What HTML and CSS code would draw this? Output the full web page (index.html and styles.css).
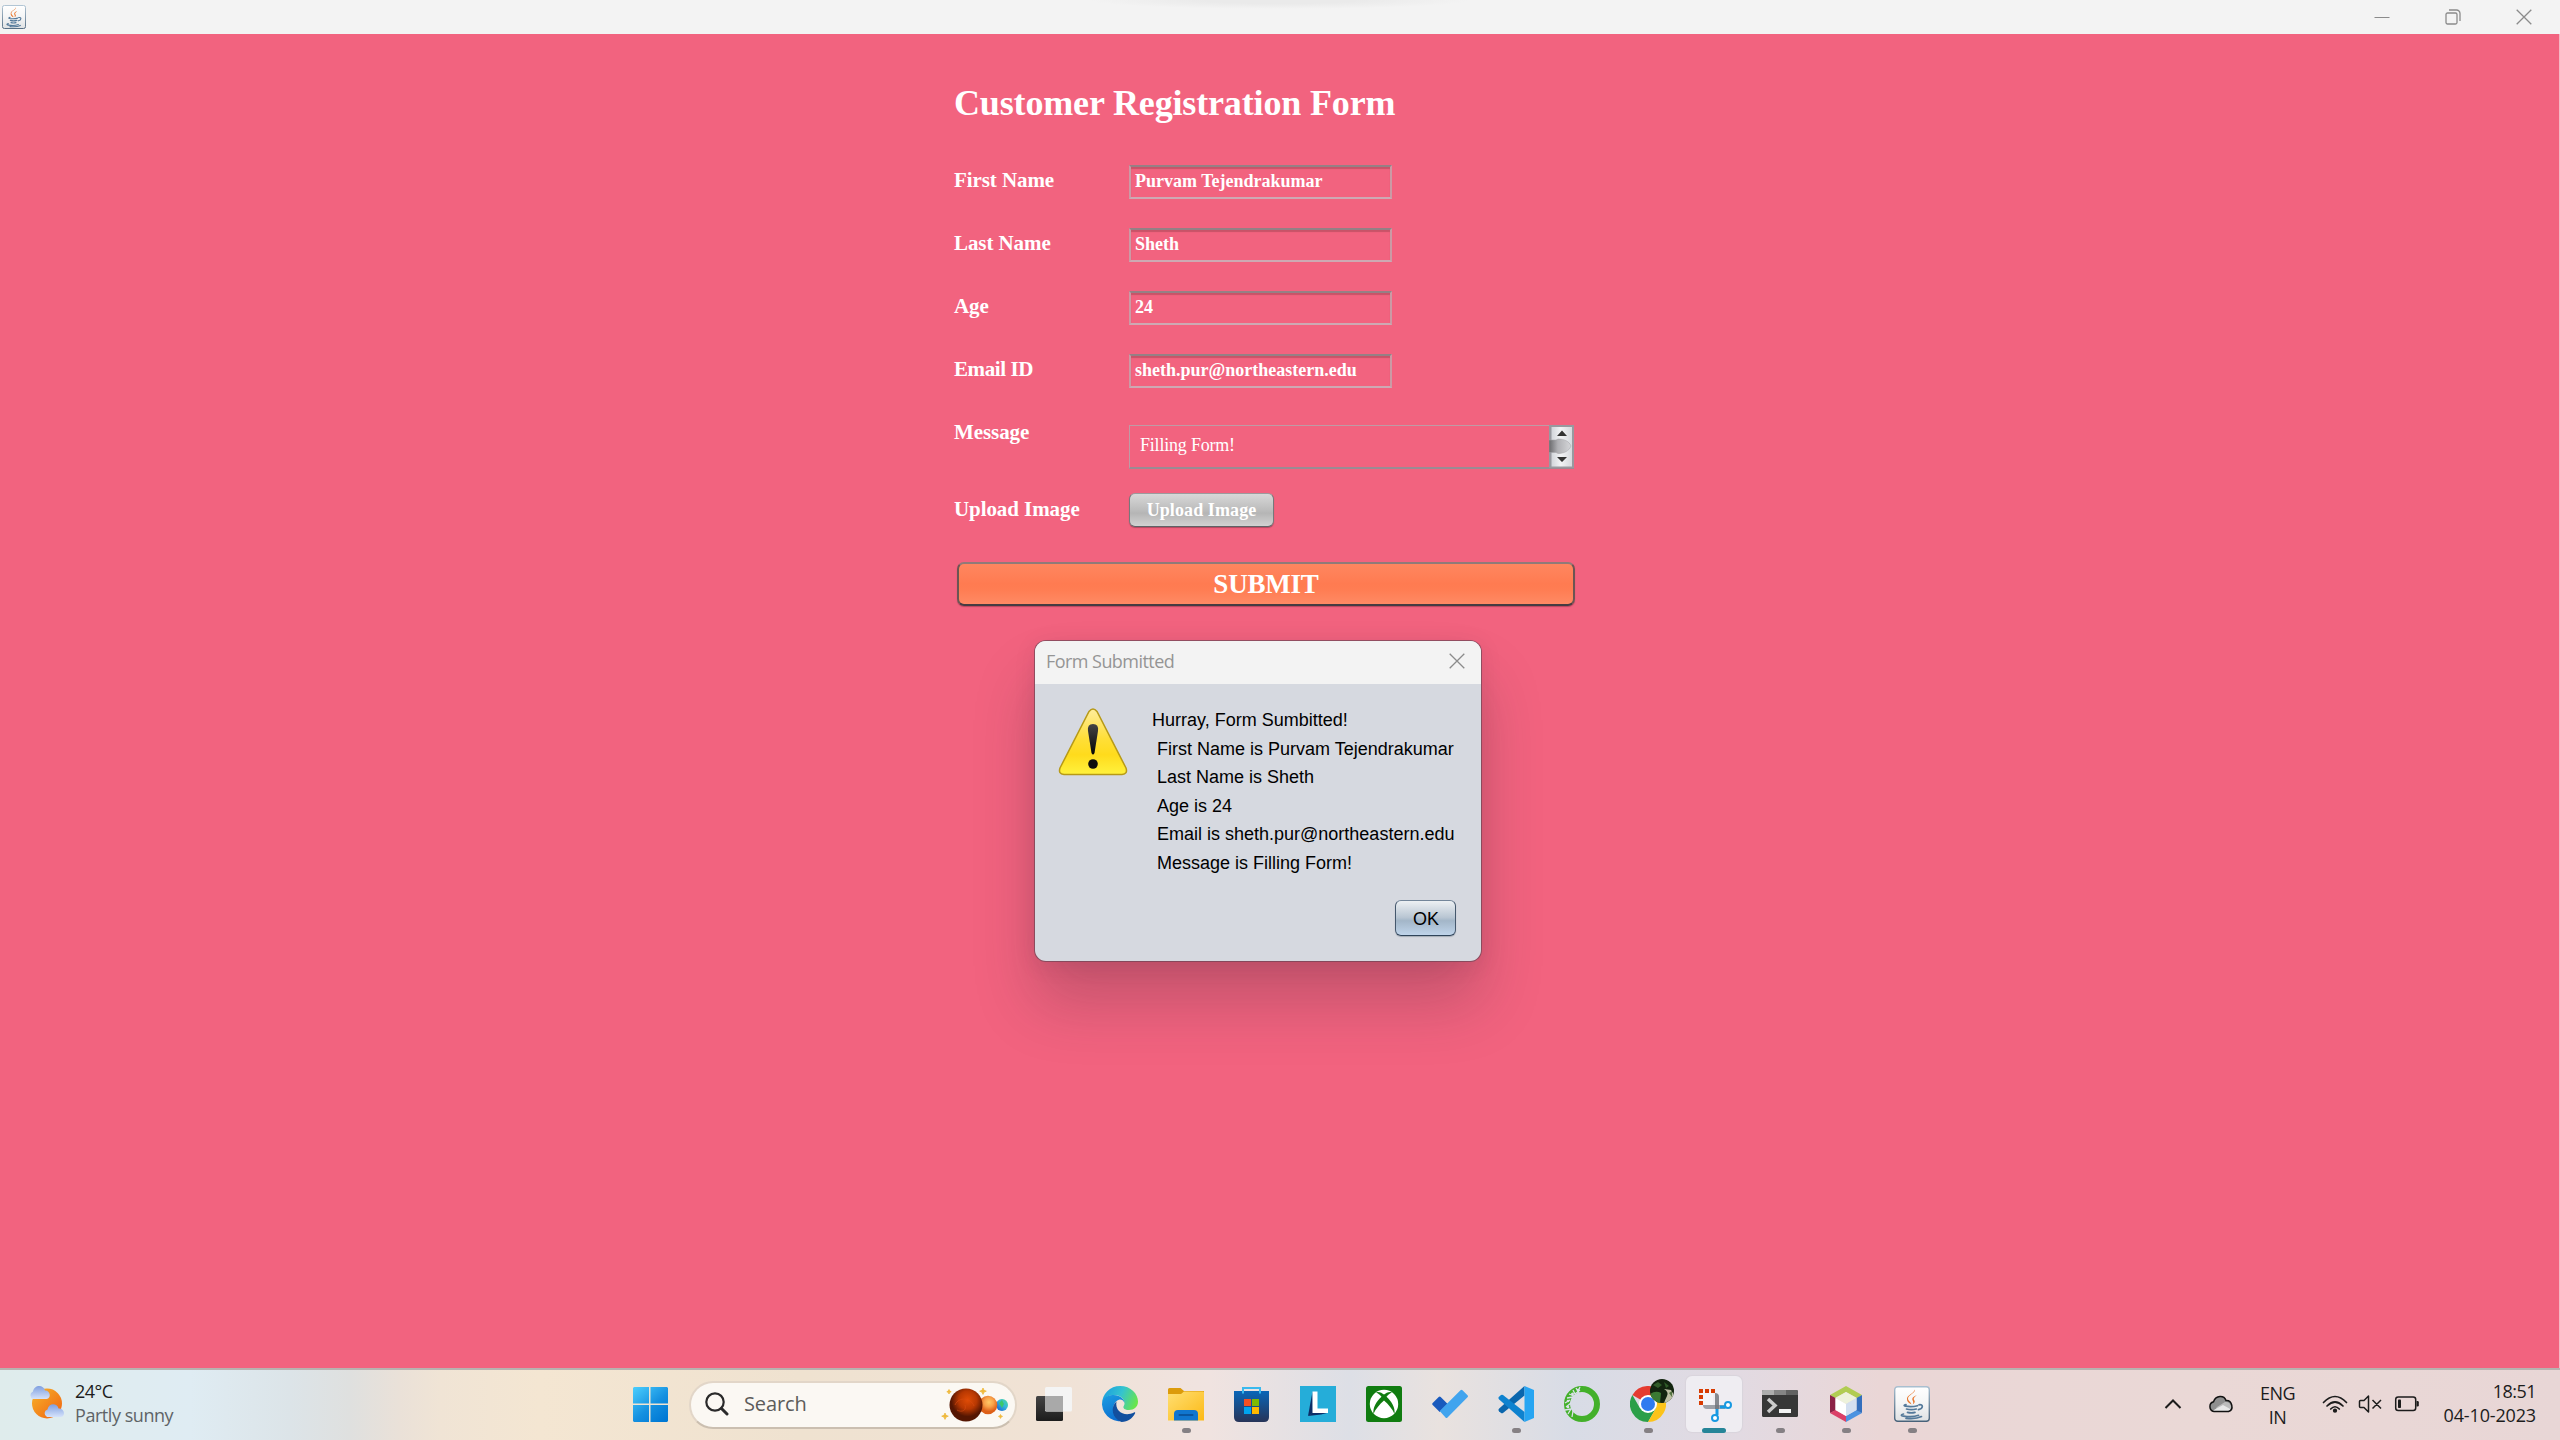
FILE: index.html
```html
<!DOCTYPE html>
<html lang="en">
<head>
<meta charset="utf-8">
<title>Customer Registration Form</title>
<link rel="stylesheet" href="styles.css">
</head>
<body>
<svg class="defs" aria-hidden="true">
  <defs>
    <linearGradient id="jbg" x1="0" y1="0" x2="0" y2="1"><stop offset="0" stop-color="#fff"/><stop offset=".5" stop-color="#f4f5f6"/><stop offset="1" stop-color="#dfe1e3"/></linearGradient>
    <linearGradient id="jbd" x1="0" y1="0" x2="0" y2="1"><stop offset="0" stop-color="#a9bfd0"/><stop offset="1" stop-color="#48627a"/></linearGradient>
    <symbol id="java" viewBox="0 0 36 36">
      <rect x=".7" y=".7" width="34.6" height="34.6" rx="3" fill="url(#jbg)" stroke="url(#jbd)" stroke-width="1.4"/>
      <path d="M20.5 3.5c2 3-6.500 5.500-6.500 9 0 2.500 3 3.500 3.500 6-3-1.500-5-3.500-4.500-6.300.6-3.400 7.500-5 7.500-8.700z" fill="#e8762d"/>
      <path d="M23 9c-3 1.200-5 2.500-4.700 4.500.3 1.500 1.800 2.500.4 5 4-3 1-4 1-5.500 0-1.200 1.500-2.500 3.300-4z" fill="#e8762d"/>
      <g fill="none" stroke="#54799a" stroke-width="1.700" stroke-linecap="round"><path d="M12 18.600c-2 .5-2.600 1.200-.5 1.600 3.500.6 9 .3 12-.5"/><path d="M12.500 23c3 .9 7 .8 9.800 0M13.500 26.400c2.500.7 5 .7 7.500 0M25 18.800c4.500-.8 4.500 3.700-.5 4.900"/><path d="M9.500 28c-2.500.7-3.200 1.600 0 2.100 5 .8 11.500.6 15-.8M12 32.400c5 .5 11.500.3 15.500-1.800"/></g>
    </symbol>
    <symbol id="close" viewBox="0 0 16 16"><path d="M.7.700l14.600 14.600M15.300.700.7 15.300" stroke="#8b8b8b" stroke-width="1.300" fill="none"/></symbol>
  </defs>
</svg>

<div class="screen">
  <header class="titlebar">
    <svg class="app-icon"><use href="#java"/></svg>
    <div class="controls">
      <svg width="16" height="16"><path d="M.5 8.500h15" stroke="#8b8b8b" stroke-width="1"/></svg>
      <svg width="16" height="16" fill="none" stroke="#8b8b8b" stroke-width="1.300"><rect x="1" y="4" width="11" height="11" rx="1.500"/><path d="M4 1h7.500A3.500 3.500 0 0 1 15 4.500V12"/></svg>
      <svg width="16" height="16"><use href="#close"/></svg>
    </div>
  </header>

  <main class="client">
    <form class="form">
      <h1>Customer Registration Form</h1>
      <div class="row"><label>First Name</label><div class="field">Purvam Tejendrakumar</div></div>
      <div class="row"><label>Last Name</label><div class="field">Sheth</div></div>
      <div class="row"><label>Age</label><div class="field">24</div></div>
      <div class="row"><label class="tight">Email ID</label><div class="field">sheth.pur@northeastern.edu</div></div>
      <div class="row">
        <label>Message</label>
        <div class="area"><span>Filling Form!</span>
          <svg width="25" height="43" viewBox="0 0 25 43">
            <defs><linearGradient id="sb"><stop offset="0" stop-color="#d2d5da"/><stop offset=".45" stop-color="#f2f3f5"/><stop offset="1" stop-color="#d6d9dd"/></linearGradient><linearGradient id="th"><stop offset="0" stop-color="#69696c"/><stop offset=".4" stop-color="#b0b0b4"/><stop offset="1" stop-color="#d5d6d9"/></linearGradient></defs>
            <rect x="0" y="0" width="25" height="43" fill="#98999f"/><rect x="2.500" y="2" width="20.500" height="39.500" fill="url(#sb)"/>
            <path d="M0 15h7l2-1c6 0 11 2 13 7-2 5-7 7.500-13 7.500l-2-1H0z" fill="url(#th)" stroke="#a2a3a7" stroke-width=".5"/>
            <path d="M8 11l5-5.500 5 5.500zM8 32l5 5 5-5z" fill="#333"/>
          </svg>
        </div>
      </div>
      <div class="row upload"><label>Upload Image</label><button type="button" class="btn-upload">Upload Image</button></div>
      <button type="button" class="btn-submit">SUBMIT</button>
    </form>
  </main>

  <footer class="taskbar">
    <div class="weather">
      <svg width="38" height="40" viewBox="0 0 38 40">
        <defs><linearGradient id="sun" x1="0" y1="0" x2="1" y2="1"><stop offset="0" stop-color="#f7b52b"/><stop offset="1" stop-color="#f0600f"/></linearGradient><linearGradient id="cl" x1="0" y1="0" x2="0" y2="1"><stop offset="0" stop-color="#7f9fe0"/><stop offset="1" stop-color="#d5e2fb"/></linearGradient></defs>
        <ellipse cx="19" cy="19.500" rx="15" ry="15" fill="url(#sun)"/>
        <path d="M5 15a4 4 0 0 1 0-7.500C6 .5 15.500 0 17 6.500c5-.5 7 7.500 1.500 8.500z" fill="url(#cl)"/>
        <path d="M19 33a4 4 0 0 1 .5-7.500c1-6.500 9.500-7 11-1 6-.5 7.500 7.500 2.500 8.500z" fill="url(#cl)"/>
      </svg>
      <div class="lines"><span class="temp">24°C</span><span class="muted">Partly sunny</span></div>
    </div>

    <svg class="start" viewBox="0 0 36 36">
      <defs><linearGradient id="win" gradientUnits="userSpaceOnUse" x1="0" y1="0" x2="30" y2="36"><stop offset="0" stop-color="#4fd2ff"/><stop offset=".6" stop-color="#1590e0"/><stop offset="1" stop-color="#0078d4"/></linearGradient></defs>
      <g fill="url(#win)"><path d="M2 1h15v16.500H1V2zM18.500 1H35l1 1v15.500H18.500zM1 19h16v17H2l-1-1zM18.500 19H36v16l-1 1H18.500z"/></g>
    </svg>

    <div class="search">
      <svg width="24" height="24" fill="none" stroke="#2a2a2a" stroke-width="2.200" stroke-linecap="round"><circle cx="10" cy="10" r="8.700"/><path d="M16.500 16.500l5.500 5.500" stroke-width="3"/></svg>
      <span>Search</span>
      <svg class="planets" width="70" height="36" viewBox="0 0 70 36">
        <defs><radialGradient id="mars" cx=".55" cy=".35"><stop offset="0" stop-color="#e04c06"/><stop offset=".55" stop-color="#b83802"/><stop offset="1" stop-color="#551602"/></radialGradient><radialGradient id="ven" cx=".55" cy=".35"><stop offset="0" stop-color="#ffc966"/><stop offset=".5" stop-color="#f8a14a"/><stop offset="1" stop-color="#dd5f18"/></radialGradient><linearGradient id="ear" x1="1" y1="0" x2="0" y2="1"><stop offset="0" stop-color="#4ee08d"/><stop offset=".45" stop-color="#36b5dd"/><stop offset="1" stop-color="#1652cf"/></linearGradient></defs>
        <circle cx="62" cy="18" r="6" fill="url(#ear)"/><path d="M59 16l3-3 2 4-2 4z" fill="#3cc86c"/>
        <circle cx="48" cy="18" r="9.300" fill="url(#ven)"/><circle cx="26" cy="18" r="16.500" fill="url(#mars)"/>
        <path d="M15 18c4-9 16-7 19 1M17 23c5 3 10 0 8-5" stroke="#d94b12" fill="none" opacity=".6"/>
        <path d="M43 1l1 2.300 2.300.9-2.300.9-1 2.300-1-2.300-2.300-.9 2.300-.9zM9 2.500l.7 1.500 1.500.7-1.500.7L9 7l-.7-1.600-1.500-.7 1.500-.7zM5 26l1 2.300 2.300.9-2.300.9-1 2.300-1-2.300-2.300-.9 2.300-.9zM60.500 27.500l.6 1.300 1.400.6-1.400.6-.6 1.400-.6-1.400-1.400-.6 1.400-.6z" fill="#efb93c" stroke="#efb93c" stroke-width=".8"/>
      </svg>
    </div>

    <nav class="apps">
      <div class="app">
        <svg viewBox="0 0 36 36"><defs><linearGradient id="tv" x1="0" y1="0" x2="0" y2="1"><stop offset="0" stop-color="#444"/><stop offset="1" stop-color="#1c1c1c"/></linearGradient></defs><rect y="10" width="27" height="25" rx="1.500" fill="url(#tv)"/><rect x="9" y="1" width="27" height="24.500" rx="1.500" fill="#f4f4f4"/><path d="M9 10h18v15.500H10.500L9 24z" fill="#a9a9a9"/></svg>
      </div>
      <div class="app">
        <svg viewBox="0 0 36 36"><defs><linearGradient id="e1" x1="0" y1=".3" x2="1" y2=".6"><stop offset="0" stop-color="#1b9fe0"/><stop offset=".5" stop-color="#35c3cf"/><stop offset="1" stop-color="#6ae649"/></linearGradient><linearGradient id="e2" x1="0" y1="0" x2=".4" y2="1"><stop offset="0" stop-color="#1b9de2"/><stop offset="1" stop-color="#0c6fd0"/></linearGradient></defs>
          <path d="M0 18A18 18 0 0 1 18 0c11 0 18 8 18 15.500 0 5.500-4 8.500-9 8.500-4.500 0-6-1.800-5.500-3.500.8-1.500 1-2 1-3.500C22 12 18 9 11.500 9 5.500 9 1 13 0 18z" fill="url(#e1)"/>
          <path d="M0 18.500C0 12 5.500 8.500 11.500 9c6.500.3 10.800 4 11 8-1-3-3.800-4-5.500-3.300-5 1.800-7 8-4.500 13 2.500 4.800 7 7.300 12 7.300A18 18 0 0 1 0 18.500z" fill="url(#e2)"/>
          <path d="M14.500 15.500c-6.500 5.500-4.500 17 5 20.500 6.500 0 11-3.700 13.500-8.500.5-1.300-.3-1.500-1-1-9 4.500-19.500-.5-17.500-11z" fill="#124f9e"/></svg>
      </div>
      <div class="app running">
        <svg viewBox="0 0 36 36"><defs><linearGradient id="fo" x1="0" y1="0" x2="1" y2="1"><stop offset="0" stop-color="#ffdf73"/><stop offset="1" stop-color="#fcb915"/></linearGradient></defs><path d="M0 3.500Q0 2 1.500 2h11l3.500 3H36v5H0z" fill="#dc9b0b"/><path d="M0 8h13l3-2.500h19q1 0 1 1V34.500H0z" fill="url(#fo)"/><path d="M6 34.500V28q0-4 4-4h16q4 0 4 4v6.500z" fill="#1076cf"/><rect x="10.500" y="28" width="15" height="2" rx="1" fill="#0a559f"/></svg>
      </div>
      <div class="app">
        <svg viewBox="0 0 36 36"><defs><linearGradient id="st" x1="0" y1="0" x2="0" y2="1"><stop offset="0" stop-color="#0a66b8"/><stop offset="1" stop-color="#273458"/></linearGradient></defs><path d="M0 5h35v26q0 5-5 5H5q-5 0-5-5z" fill="url(#st)"/><path d="M9 7.500V2h17v5.500" fill="none" stroke="#39b9ee" stroke-width="2"/><path d="M10 13h7v7h-7z" fill="#f25022"/><path d="M18 13h7v7h-7z" fill="#7fba00"/><path d="M10 21h7v7h-7z" fill="#00a4ef"/><path d="M18 21h7v7h-7z" fill="#ffb900"/></svg>
      </div>
      <div class="app">
        <svg viewBox="0 0 36 36"><path d="M0 0h36v36H0z" fill="#25add9"/><path d="M12.500 5.500L8 30l5-3z" fill="#0d2d66"/><path d="M8 30l5-3.500 14 .5-6 1.500z" fill="#0d2d66"/><path d="M12.500 5.500h5V22.500H28V27H12.500z" fill="#fff"/></svg>
      </div>
      <div class="app">
        <svg viewBox="0 0 36 36"><rect width="36" height="36" rx="2.500" fill="#107c10"/><circle cx="18" cy="18" r="14.200" fill="#fff"/><path d="M9.500 6.500C12.500 5 16 7 18 8.500 20 7 23.500 5 26.500 6.500 25 6.500 22.500 8.500 20.500 10.700 25.500 15.500 29.500 21.500 28.500 28 26.500 23 22.500 18.500 18 14.500 13.500 18.500 9.500 23 7.500 28 6.500 21.500 10.500 15.500 15.500 10.700 13.500 8.500 11 6.500 9.500 6.500z" fill="#107c10"/></svg>
      </div>
      <div class="app">
        <svg viewBox="0 0 36 36"><path d="M.7 17l6-6q1-1 2 0l7 7-8 8L.7 19q-1-1 0-2z" fill="#195abd"/><path d="M7.700 25L28.500 4.200q1-1 2 0l5 5q1 1 0 2L15.500 31.500q-1 1-2 0z" fill="#41a4ee"/></svg>
      </div>
      <div class="app running">
        <svg viewBox="0 0 36 36"><path d="M1.200 22.500L26.500 0v9.500L5 27q-1 .6-2 0l-2-1.800q-1.200-1.300.2-2.700z" fill="#0a66ad"/><path d="M1.200 13.500q-1.400-1.400-.2-2.700L3 9q1-.6 2 0l21.500 17v10z" fill="#0e82cf"/><path d="M26.500 0L36 4v28l-9.500 4z" fill="#27a5f2"/></svg>
      </div>
      <div class="app">
        <svg viewBox="0 0 36 36"><circle cx="18" cy="18" r="15" fill="none" stroke="#43b02a" stroke-width="6"/><g fill="none" stroke="#dce1ea" stroke-width="1.300"><path d="M16 1l-3 6M12 2l3 5M9 4l2 4 5-4M5 8l5 2M3 12l6-1M1 17l5-3M2 21l5-4M1 24l6-1M4 28l3-5M8 31l1-6"/></g><g fill="#dce1ea"><circle cx="8.500" cy="8" r="1.500"/><circle cx="4" cy="15" r="1.300"/><circle cx="14" cy="4" r="1.300"/><circle cx="4" cy="21" r="1.300"/></g></svg>
      </div>
      <div class="app running chrome">
        <svg viewBox="0 0 36 36"><path d="M18 18L2.400 9A18 18 0 0 1 33.600 9H18z" fill="#e53b30"/><path d="M18 18L10.200 22.500 2.400 9A18 18 0 0 0 18 36l7.800-13.500z" fill="#2c9f49"/><path d="M18 9h15.600A18 18 0 0 1 18 36l7.800-13.500z" fill="#fcc31a"/><circle cx="18" cy="18" r="9" fill="#fff"/><circle cx="18" cy="18" r="7" fill="#2f7bf0"/></svg>
        <svg class="avatar" viewBox="0 0 24 24"><defs><clipPath id="av"><circle cx="12" cy="12" r="12"/></clipPath></defs><g clip-path="url(#av)"><path d="M0 0h24v24H0z" fill="#12240f"/><path d="M0 15q6-4 11-1l-1 10H0z" fill="#3b7a33"/><path d="M3 6l5-3 4 3-4 3zM14 3l5 4-3 2z" fill="#2f5b28"/><path d="M14 10q5 3 3 7t-3 7h6l4-8-3-5z" fill="#bdbfa4"/><path d="M19 14l3-2v6z" fill="#527340"/></g></svg>
      </div>
      <div class="app running active">
        <svg viewBox="0 0 36 36"><path d="M5 5h12v14H5z" fill="#f5f4f7"/><path d="M3 3h4v4H3zM9 3h4v4H9zM15 3h4v4h-4zM3 9h4v4H3zM3 15h4v4H3z" fill="#d83b01"/><path d="M19 7q4 0 4 4v12h-4z" fill="#86898f"/><path d="M7 19h22v4H11q-4 0-4-4z" fill="#9da1a8"/><path d="M19 19h4v4h-4z" fill="#777b82"/><path d="M21 23v6M24 21h6" stroke="#1799e2" stroke-width="3"/><g fill="#fff" stroke="#1799e2" stroke-width="2"><circle cx="32" cy="19" r="3"/><circle cx="19" cy="32" r="3"/></g></svg>
      </div>
      <div class="app running">
        <svg viewBox="0 0 36 36"><rect y="4" width="36" height="27" rx="1.500" fill="#373737"/><path d="M0 9V5.500Q0 4 1.500 4H12v5z" fill="#adadad"/><path d="M12 4h12v5H12z" fill="#858585"/><path d="M24 4h10.500Q36 4 36 5.500V9H24z" fill="#626262"/><path d="M6 13l7 6.500-7 6.500" fill="none" stroke="#ccc" stroke-width="3.500"/><rect x="17" y="23" width="12" height="4" fill="#f2f2f2"/></svg>
      </div>
      <div class="app running">
        <svg viewBox="0 0 36 36"><path d="M18 0l16 9-5 3-11-6L7 12 2 9z" fill="#b1cc52"/><path d="M2 9l5.500 3v12.500L2 27z" fill="#8c2246"/><path d="M2 27l5.500-3L18 30v6z" fill="#db3f67"/><path d="M34 27l-5.500-3L18 30v6z" fill="#4b92e0"/><path d="M34 9l-5.500 3v12.500L34 27z" fill="#336fbd"/><path d="M18 6l10.500 6L18 18 7.500 12z" fill="#eef2db"/><path d="M7.500 12L18 18v12L7.500 24z" fill="#fff"/><path d="M28.500 12L18 18v12l10.500-6z" fill="#d3dff0"/></svg>
      </div>
      <div class="app running"><svg viewBox="0 0 36 36"><use href="#java"/></svg></div>
    </nav>

    <div class="tray">
      <svg class="chevron" width="18" height="12" fill="none" stroke="#1c1c1c" stroke-width="2"><path d="M1.500 10L9 2.500 16.500 10"/></svg>
      <svg class="cloud" width="26" height="18" viewBox="0 0 26 18"><path d="M6 16.500a5 5 0 0 1-.5-9.700C8 0 16 0 18 5.500c6-.5 8.500 9 2.500 11z" fill="#8f8f8f"/><path d="M9 12l8-5c6-1 8.500 8 3.500 9.500H6z" fill="#bcbcbc"/><path d="M4 16L15 10l9 5-3.500 1.500H6z" fill="#e8e8e8"/><path d="M6 16.500a5 5 0 0 1-.5-9.700C8 0 16 0 18 5.500c6-.5 8.500 9 2.500 11z" fill="none" stroke="#111" stroke-width="1.500"/></svg>
      <div class="lines lang"><span>ENG</span><span>IN</span></div>
      <svg class="wifi" width="26" height="20" viewBox="0 0 26 20" fill="none" stroke="#1c1c1c" stroke-width="1.700" stroke-linecap="round"><path d="M1.500 8.500q11.500-12 23 0M5 12q8-8 16 0M8.700 15q4.300-4.500 8.600 0"/><circle cx="13" cy="16.700" r="1.300" fill="#1c1c1c"/></svg>
      <svg class="speaker" width="25" height="20" viewBox="0 0 25 20" fill="none" stroke="#1c1c1c" stroke-width="1.500"><path d="M2.500 6.500H6L10.500 2v16L6 13.500H2.500q-1 0-1-1v-5q0-1 1-1zM14.500 6l8.500 8.500M23 6l-8.500 8.500" stroke-linejoin="round"/></svg>
      <svg class="battery" width="26" height="18" viewBox="0 0 26 18"><rect x="1.700" y="2" width="20" height="13.500" rx="2.500" fill="none" stroke="#1c1c1c" stroke-width="1.500"/><rect x="4" y="4.500" width="3" height="8.500" rx=".8" fill="#1c1c1c"/><path d="M22.500 6h1q1.300 0 1.300 1.300v3q0 1.300-1.300 1.300h-1z" fill="#1c1c1c"/></svg>
      <div class="lines clock"><span class="time">18:51</span><span class="date">04-10-2023</span></div>
    </div>
  </footer>

  <section class="dialog">
    <div class="dialog-bar"><span>Form Submitted</span><svg width="16" height="16"><use href="#close"/></svg></div>
    <div class="dialog-body">
      <svg class="warn" width="70" height="68" viewBox="0 0 70 68">
        <defs><linearGradient id="wy" x1="0" y1="0" x2="0" y2="1"><stop offset="0" stop-color="#ffed9c"/><stop offset=".45" stop-color="#ffdf38"/><stop offset=".7" stop-color="#ffdb1c"/><stop offset="1" stop-color="#fff23e"/></linearGradient><linearGradient id="wb" x1="0" y1="0" x2="0" y2="1"><stop offset="0" stop-color="#444"/><stop offset="1" stop-color="#050505"/></linearGradient></defs>
        <path d="M31 3.500q4-5 8 0L68 60q2 6-4 6.500H6Q0 66 2 60z" fill="url(#wy)" stroke="#b79a17" stroke-width="1.500"/>
        <path d="M35 16q6 0 5 7l-3.500 22q-1.500 3-3 0L30 23q-1-7 5-7z" fill="url(#wb)"/><circle cx="35" cy="56" r="4.800" fill="#0d0d0d"/>
      </svg>
      <div class="msg"><p>Hurray, Form Sumbitted!</p><p class="in">First Name is Purvam Tejendrakumar</p><p class="in">Last Name is Sheth</p><p class="in">Age is 24</p><p class="in">Email is sheth.pur@northeastern.edu</p><p class="in">Message is Filling Form!</p></div>
    </div>
    <div class="dialog-actions"><button type="button" class="btn-ok">OK</button></div>
  </section>
</div>
</body>
</html>
```
FILE: styles.css
```css
* { box-sizing: border-box; }
body { margin: 0; }
h1, p { margin: 0; }
svg { display: block; flex: none; }
button { padding: 0; margin: 0; }
.defs { position: absolute; width: 0; height: 0; }

.screen {
  position: relative;
  display: flex;
  flex-direction: column;
  width: 2560px;
  height: 1440px;
  overflow: hidden;
}

/* window title bar */
.titlebar {
  display: flex;
  align-items: center;
  justify-content: space-between;
  height: 34px;
  padding: 0 28px 1px 2px;
  background: radial-gradient(ellipse 190px 9px at 1280px 0, #eaeaea 40%, #f3f3f3 100%);
}
.app-icon { width: 24px; height: 24px; }
.controls { display: flex; gap: 55px; }

/* form */
.client {
  flex: 1;
  padding: 49px 0 0 954px;
  background: #f2637f;
  border-right: 1px solid #f5b7c3;
}
.form {
  display: flex;
  flex-direction: column;
  gap: 29px;
  width: 621px;
  font-family: "Liberation Serif", serif;
  color: #fff;
}
h1 {
  margin-bottom: 13px;
  font-size: 36px;
  line-height: 40px;
  font-weight: bold;
  letter-spacing: -.15px;
}
.row {
  display: grid;
  grid-template-columns: 175px 1fr;
  align-items: start;
}
.row label {
  font-size: 21px;
  line-height: 30px;
  font-weight: bold;
  letter-spacing: -.08px;
}
.row .tight { letter-spacing: -.4px; }
.field {
  width: 263px;
  height: 34px;
  padding-left: 4px;
  border: 2px solid #cb9aa5;
  border-top-color: #958085;
  border-bottom-color: #cda9b3;
  box-shadow: inset 0 2px 1px #c85368;
  font-size: 18px;
  line-height: 29px;
  font-weight: bold;
}
.area {
  display: flex;
  justify-content: space-between;
  width: 445px;
  height: 44px;
  margin-top: 8px;
  border: solid #be9ba5;
  border-width: 1px 0 2px 1px;
  border-bottom-color: #9b8b93;
  font-size: 18px;
  letter-spacing: -.2px;
}
.area svg { margin-top: -1px; }
.area span { padding-left: 10px; line-height: 39px; }
.upload { margin-top: -5px; height: 35px; }
.upload label { padding-top: 1px; }
.btn-upload {
  width: 145px;
  height: 34px;
  border: 1.500px solid #77787b;
  border-top-color: #9b9b9d;
  border-bottom-color: #606266;
  border-radius: 6px;
  background: linear-gradient(#d8d8d8, #bcbcbc 50%, #b5b5b5 60%, #d2d2d2);
  box-shadow: 0 1px 1px #b34860;
  color: #fff;
  font: bold 18px/32px "Liberation Serif", serif;
  letter-spacing: .1px;
}
.btn-submit {
  width: 618px;
  height: 44px;
  margin: 5px 0 0 3px;
  border: 2px solid #6c5553;
  border-top-color: #917a78;
  border-bottom-color: #463c42;
  border-radius: 7px;
  background: linear-gradient(#ff865f, #ff7b51 50%, #ff7d53 65%, #ff8a64);
  box-shadow: 0 1px 1px #b8485f;
  color: #fff;
  font: bold 27px/38px "Liberation Serif", serif;
  letter-spacing: -.2px;
}

/* message dialog */
.dialog {
  position: absolute;
  left: 1035px;
  top: 641px;
  display: flex;
  flex-direction: column;
  width: 446px;
  height: 320px;
  border-radius: 11px;
  background: #d6d9e0;
  box-shadow: 0 0 0 1px rgba(110, 70, 85, .7), 0 4px 22px rgba(60, 30, 50, .1), 0 42px 62px rgba(50, 35, 50, .24);
  color: #000;
  font: 18px "Liberation Sans", sans-serif;
}
.dialog-bar {
  display: flex;
  align-items: center;
  justify-content: space-between;
  height: 43px;
  padding: 0 16px 3px 11px;
  border-radius: 11px 11px 0 0;
  background: #f3f3f3;
  color: #959595;
  font: 18px "Open Sans", sans-serif;
  letter-spacing: -.55px;
}
.dialog-body { display: flex; gap: 24px; padding: 22px 0 0 23px; height: 216px; }
.warn { margin-top: 2px; }
.msg { line-height: 28.600px; white-space: nowrap; }
.msg .in { padding-left: 5px; }
.dialog-actions { display: flex; justify-content: flex-end; padding-right: 25px; }
.btn-ok {
  width: 61px;
  height: 36px;
  padding: 1px 0 0 1px;
  border: 1.500px solid #45586d;
  border-top-color: #74869a;
  border-bottom-color: #2f445a;
  border-radius: 6px;
  background: linear-gradient(#edf0f3, #b9c6d3 48%, #a3b6c8 58%, #bfd4ea);
  box-shadow: 0 1px 1px #a4abb4;
  color: #000;
  font: 18px/34px "Liberation Sans", sans-serif;
}

/* taskbar */
.taskbar {
  display: flex;
  align-items: center;
  height: 72px;
  padding: 0 24px 2px 28px;
  border-top: 2px solid #b8b2af;
  background: linear-gradient(90deg, #dfecec 0, #dfecf3 190px, #dce4e8 290px, #dfe0df 350px, #eae1d8 400px, #f0e4d5 440px, #f4e6d2 540px, #efe2d0 800px, #f0e2d5 1050px, #f0e3e0 1210px, #dddfe6 1350px, #e9e2df 1440px, #d8dce6 1570px, #e2dae2 1740px, #ead6d6 1880px, #ead8d6 2200px, #e8d6d6 2560px);
  color: #1c1c1c;
  font: 18px/24px "Open Sans", sans-serif;
}
.lines { display: flex; flex-direction: column; letter-spacing: -.55px; white-space: nowrap; padding-bottom: 2px; }
.weather { display: flex; align-items: center; gap: 9px; width: 604px; }
.muted { color: #5e6366; letter-spacing: -.45px; }
.start { width: 36px; height: 36px; }
.search {
  display: flex;
  align-items: center;
  width: 328px;
  height: 48px;
  margin: 1px 0 0 21px;
  padding: 0 5px 2px 14px;
  border: 2px solid #e2d6c8;
  border-bottom-color: #cbbfb0;
  border-radius: 24px;
  background: #fbf8f3;
  color: #5d5c5a;
  font-size: 20px;
}
.search span { margin: 1px auto 0 15px; letter-spacing: -.1px; }
.planets { margin-top: 2px; }
.apps { display: flex; align-items: center; margin-left: 4px; }
.app {
  position: relative;
  display: flex;
  align-items: center;
  justify-content: center;
  width: 56px;
  height: 56px;
  margin: 0 5px;
  border-radius: 6px;
}
.app svg { width: 36px; height: 36px; }
.running::after {
  content: "";
  position: absolute;
  left: 24px;
  bottom: -1px;
  width: 9px;
  height: 5px;
  border-radius: 3px;
  background: #858084;
}
.active { background: #efedf2; box-shadow: 0 0 1px 1px #d9d4dc; }
.active::after { left: 16px; width: 24px; background: #268598; }
.app .avatar { position: absolute; left: 30px; top: 3px; width: 24px; height: 24px; }
.tray { display: flex; align-items: center; margin-left: auto; }
.cloud { margin-left: 26px; }
.lang { margin: 1px 0 0 26px; align-items: center; padding-bottom: 0; }
.wifi { margin-left: 27px; }
.speaker { margin-left: 10px; }
.battery { margin-left: 11px; }
.clock { width: 94px; margin-left: 22px; align-items: flex-end; }
.date { letter-spacing: -.15px; }
```
